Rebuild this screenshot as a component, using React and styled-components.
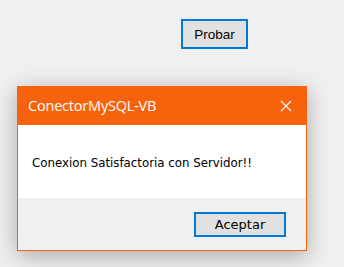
import React from "react";
import styled, { createGlobalStyle } from "styled-components";

const GlobalStyle = createGlobalStyle`
  html, body {
    margin: 0;
    padding: 0;
    background: #f0f0f0;
    overflow: hidden;
  }
`;

const Page = styled.div`
  width: 344px;
  height: 267px;
  display: flex;
  flex-direction: column;
  align-items: flex-start;
  padding-top: 19px;
  box-sizing: border-box;
`;

const WinButton = styled.button`
  box-sizing: border-box;
  width: ${(p) => p.$w}px;
  height: ${(p) => p.$h}px;
  margin-left: ${(p) => p.$left || 0}px;
  background: #e1e1e1;
  border: 2px solid #0078d7;
  outline: none;
  padding: 0;
  font: normal normal normal ${(p) => p.$size}px ${(p) => p.$font};
  color: #000000;
  cursor: default;
`;

const Dialog = styled.div`
  box-sizing: border-box;
  width: 290px;
  height: 165px;
  margin-top: 37px;
  margin-left: 17px;
  border: 1px solid #f7630c;
  border-top: none;
  background: #f0f0f0;
  display: flex;
  flex-direction: column;
  box-shadow: 0 5px 22px rgba(0, 0, 0, 0.3);
`;

const TitleBar = styled.div`
  height: 39px;
  margin: 0 -1px;
  background: #f7630c;
  display: flex;
  align-items: center;
  justify-content: space-between;
  padding-left: 11px;
  padding-right: 15px;
`;

const Title = styled.span`
  font: normal normal normal 14.5px "Open Sans", sans-serif;
  color: #ffffff;
  letter-spacing: -0.2px;
`;

const Body = styled.div`
  height: 73px;
  background: #ffffff;
  display: flex;
  align-items: center;
  padding-left: 14px;
  padding-top: 3px;
  box-sizing: border-box;
`;

const Message = styled.span`
  font: normal normal normal 11.8px "DejaVu Sans", sans-serif;
  color: #000000;
`;

const Footer = styled.div`
  flex: 1;
  display: flex;
  justify-content: flex-end;
  align-items: flex-start;
  padding-top: 14px;
  padding-right: 20px;
`;

const CloseIcon = () => (
  <svg width="12" height="12" viewBox="0 0 12 12">
    <path d="M1 1 L11 11 M11 1 L1 11" stroke="#ffffff" strokeWidth="1.1" />
  </svg>
);

const App = () => {
  return (
    <>
      <GlobalStyle />
      <Page>
        <WinButton $w={67} $h={30} $left={181} $size={13.5} $font={'"Liberation Sans", sans-serif'}>
          Probar
        </WinButton>
        <Dialog>
          <TitleBar>
            <Title>ConectorMySQL-VB</Title>
            <CloseIcon />
          </TitleBar>
          <Body>
            <Message>Conexion Satisfactoria con Servidor!!</Message>
          </Body>
          <Footer>
            <WinButton $w={92} $h={25} $size={13} $font={'"DejaVu Sans", sans-serif'}>
              Aceptar
            </WinButton>
          </Footer>
        </Dialog>
      </Page>
    </>
  );
};

export default App;
